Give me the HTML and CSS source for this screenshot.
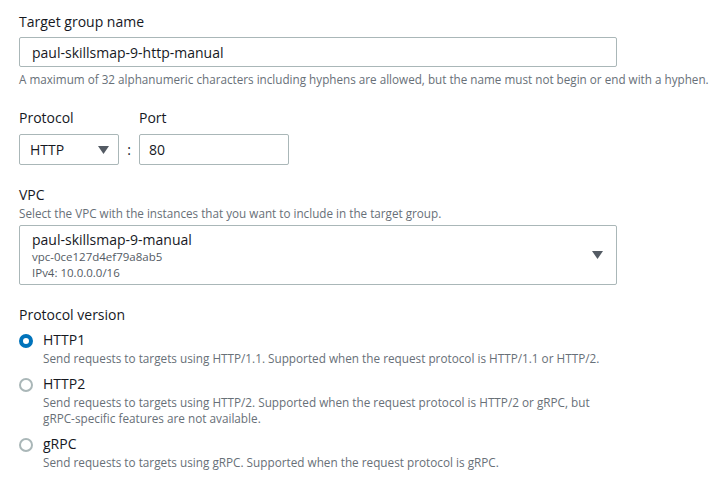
FILE: index.html
```html
<!DOCTYPE html>
<html>
<head>
<meta charset="utf-8">
<link rel="stylesheet" href="styles.css">
</head>
<body>
<div class="form">
  <div class="field f-name">
    <div class="label">Target group name</div>
    <div class="input wide"><span>paul-skillsmap-9-http-manual</span></div>
    <div class="hint">A maximum of 32 alphanumeric characters including hyphens are allowed, but the name must not begin or end with a hyphen.</div>
  </div>

  <div class="row f-proto">
    <div class="col">
      <div class="label">Protocol</div>
      <div class="select small"><span>HTTP</span><svg class="caret" width="11" height="8" viewBox="0 0 11 8"><path d="M0 0h11L5.5 8z" fill="#545b64"/></svg></div>
    </div>
    <div class="colon">:</div>
    <div class="col">
      <div class="label">Port</div>
      <div class="input port"><span>80</span></div>
    </div>
  </div>

  <div class="field f-vpc">
    <div class="label">VPC</div>
    <div class="desc">Select the VPC with the instances that you want to include in the target group.</div>
    <div class="select vpc">
      <div class="vpc-text">
        <div class="vpc-name">paul-skillsmap-9-manual</div>
        <div class="vpc-sub">vpc-0ce127d4ef79a8ab5</div>
        <div class="vpc-sub">IPv4: 10.0.0.0/16</div>
      </div>
      <svg class="caret" width="11" height="8" viewBox="0 0 11 8"><path d="M0 0h11L5.5 8z" fill="#545b64"/></svg>
    </div>
  </div>

  <div class="field f-version">
    <div class="label">Protocol version</div>
    <div class="radio">
      <span class="dot checked"></span>
      <div class="rtext">
        <div class="rlabel">HTTP1</div>
        <div class="rdesc">Send requests to targets using HTTP/1.1. Supported when the request protocol is HTTP/1.1 or HTTP/2.</div>
      </div>
    </div>
    <div class="radio">
      <span class="dot"></span>
      <div class="rtext">
        <div class="rlabel">HTTP2</div>
        <div class="rdesc">Send requests to targets using HTTP/2. Supported when the request protocol is HTTP/2 or gRPC, but<br>gRPC-specific features are not available.</div>
      </div>
    </div>
    <div class="radio">
      <span class="dot"></span>
      <div class="rtext">
        <div class="rlabel">gRPC</div>
        <div class="rdesc">Send requests to targets using gRPC. Supported when the request protocol is gRPC.</div>
      </div>
    </div>
  </div>
</div>
</body>
</html>
```

FILE: styles.css
```css
html, body {
  margin: 0;
  padding: 0;
  background: #ffffff;
}
body {
  font-family: "Open Sans", "Noto Sans", sans-serif;
  color: #16191f;
}
.form {
  padding: 12px 0 0 19px;
}
.label {
  font-size: 14px;
  line-height: 20px;
  color: #16191f;
}
.hint, .desc {
  font-size: 11.7px;
  line-height: 16px;
  color: #687078;
}
.input, .select {
  box-sizing: border-box;
  border: 1px solid #aab7b8;
  border-radius: 2px;
  background: #fff;
  font-size: 14px;
  display: flex;
  align-items: center;
}
.wide {
  width: 598px;
  height: 30px;
  margin-top: 5px;
  padding-left: 12px;
}
.hint {
  margin-top: 4px;
}
.f-proto {
  display: flex;
  align-items: flex-end;
  margin-top: 21px;
}
.col .label {
  margin-bottom: 6px;
}
.small {
  width: 100px;
  height: 31px;
  padding: 0 9px 0 10px;
  justify-content: space-between;
}
.colon {
  width: 20px;
  text-align: center;
  font-size: 14px;
  height: 31px;
  line-height: 31px;
}
.port {
  width: 150px;
  height: 31px;
  padding-left: 9px;
}
.f-vpc {
  margin-top: 20px;
}
.vpc {
  width: 598px;
  height: 60px;
  margin-top: 4px;
  padding: 0 13px 0 12px;
  justify-content: space-between;
}
.vpc-name {
  font-size: 14px;
  line-height: 19px;
}
.vpc-sub {
  font-size: 11.5px;
  line-height: 16px;
  color: #545b64;
}
.f-version {
  margin-top: 20px;
}
.radio {
  display: flex;
  margin-top: 5px;
}
.radio + .radio {
  margin-top: 8px;
}
.dot {
  box-sizing: border-box;
  width: 14px;
  height: 14px;
  border-radius: 50%;
  border: 2px solid #aab7b8;
  margin: 4px 10px 0 0;
  flex: none;
}
.dot.checked {
  border: 4px solid #0073bb;
}
.rlabel {
  font-size: 14px;
  line-height: 20px;
}
.rdesc {
  font-size: 11.75px;
  line-height: 16px;
  color: #687078;
}
```
